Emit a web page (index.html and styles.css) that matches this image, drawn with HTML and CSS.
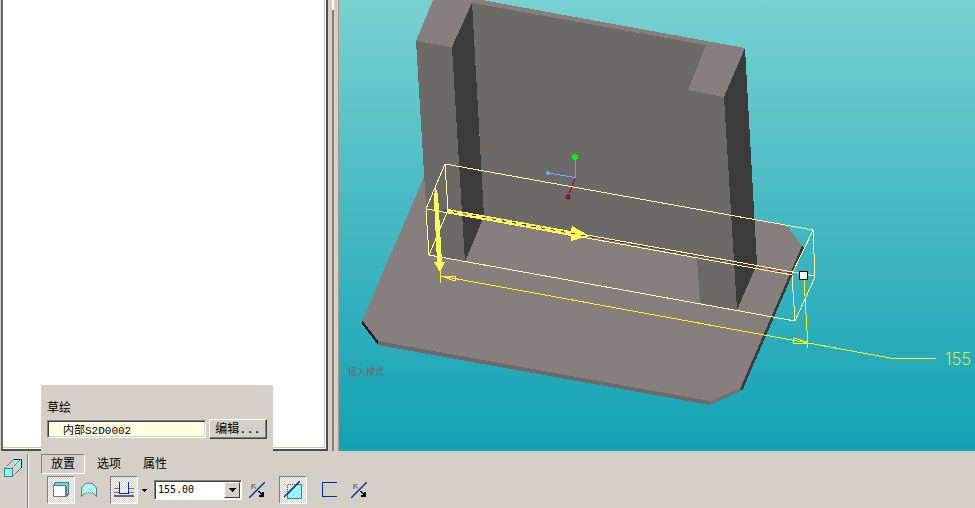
FILE: index.html
```html
<!DOCTYPE html>
<html lang="zh-CN">
<head>
<meta charset="utf-8">
<title>拉伸</title>
<link rel="stylesheet" href="styles.css">
</head>
<body>
<main class="workspace">
  <aside class="tree-pane" aria-label="模型树"></aside>
  <div class="splitter"><span class="grip"></span></div>
  <section class="viewport">
    <svg class="scene" viewBox="339 0 636 451" preserveAspectRatio="xMinYMin slice" role="img" aria-label="模型">
      <g shape-rendering="crispEdges">
        <!-- base plate -->
        <path fill="#877e7e" d="M424 177 362 321 378 342 710 402 741 389 803 247 787 226 740 215Z"/>
        <path fill="#222" d="M362 320 378 341V345L362 324Z"/>
        <path fill="#6c6967" d="M378 341 710 401V405L378 345Z"/>
        <path fill="#767070" d="M710 401 741 388V391L710 405Z"/>
        <path fill="#3b3b3b" d="M740 389 802 246 804 248 742 391Z"/>
        <!-- back wall -->
        <path fill="#6b6a68" d="M472 2 706 44 745 48 724 97 737 310 700 303 697 258 484 215Z"/>
        <!-- left post -->
        <path fill="#6b6a68" d="M416 41 452 47 465 262 429 255Z"/>
        <path fill="#3b3b3b" d="M452 47 472 2 484 216 465 262Z"/>
        <!-- right post -->
        <path fill="#3b3b3b" d="M724 97 745 48 757 264 737 310Z"/>
        <!-- top faces -->
        <path fill="#877e7e" d="M433 0 416 41 452 47 472 3 706 45 688 90 724 97 745 48 482 0Z"/>
      </g>
      <g class="triad" shape-rendering="crispEdges">
        <path stroke="#0f0" d="M575.500 178V158"/>
        <path stroke="#5ab4ff" d="M575 177.500 548 173"/>
        <path stroke="#a0003c" d="M575 178 568 197"/>
      </g>
      <circle cx="575" cy="157" r="3" fill="#0f0"/>
      <circle cx="548" cy="173" r="2" fill="#5ab4ff"/>
      <circle cx="568" cy="197" r="2.500" fill="#a0003c"/>
      <!-- extrusion preview -->
      <g shape-rendering="crispEdges" fill="none">
        <path stroke="#ffffa0" d="M445 164 813 230 815 277 795 321 429 255 426 209ZM445 164 448 210 815 276M448 210 429 255M426 209 792 275 795 321M792 274 813 230"/>
        <path fill="#ffff5c" d="M435 186 438 194 442 262H445L440 272 434 262H437L434 200ZM448 209 571 231 572 226 590 236 571 241 571 236 448 213Z"/>
        <path stroke="#a0003c" stroke-dasharray="4 6" d="M443 210 795 274"/>
        <path stroke="#ff0" d="M440.500 270V283M441 276 893 358.500H936M804 279 808 348M441 276H456L455 281 441 276M808 342 793 338V343H808"/>
      </g>
      <path shape-rendering="crispEdges" fill="#fff" stroke="#000" d="M799.500 271.500h8v8h-8z"/>
      <text class="dimension" x="945" y="365">155</text>
      <text class="mode" x="348" y="375">插入模式</text>
    </svg>
  </section>
</main>

<footer class="dashboard">
  <div class="feature">
    <svg width="18" height="20" viewBox="0 0 18 20" shape-rendering="crispEdges" role="img" aria-label="拉伸">
      <path d="M9 1h8v9h-2l-4-5z" fill="#8ff"/>
      <path d="M9 1.500h8.500M17.500 1v9" stroke="#222" fill="none"/>
      <path d="M1 10 10 1M8 10l9-9M9 18l8-8" stroke="#777" stroke-dasharray="2 1" fill="none"/>
      <path d="M.5 10.500h8v8h-8z" fill="#8ff" stroke="#487f88"/>
    </svg>
  </div>
  <div class="controls">
    <section class="slide-up">
      <label for="sketch">草绘</label>
      <div class="sketch-row">
        <input id="sketch" class="sketch-name" type="text" value="内部S2D0002" readonly>
        <button class="edit" type="button">编辑...</button>
      </div>
    </section>
    <nav class="tabs">
      <button class="tab active" type="button">放置</button>
      <button class="tab" type="button">选项</button>
      <button class="tab" type="button">属性</button>
    </nav>
    <div class="toolbar">
      <button class="tool pressed" type="button" aria-label="实体">
        <svg width="16" height="16" viewBox="0 0 16 16" shape-rendering="crispEdges"><path fill="#66dce4" d="M1 3 3 1h12v11l-3 3V3z"/><path fill="none" stroke="#487f88" d="M1 2.500 3 .5h12v12l-2 2V3.500"/><path fill="#fff" stroke="#777" d="M.5 3.500h12v11H.5z"/></svg>
      </button>
      <button class="tool surface" type="button" aria-label="曲面">
        <svg width="16" height="16" viewBox="0 0 16 16"><path fill="#a8f4f4" stroke="#60777a" d="M.5 14.500V6L4.500 1.500Q8 .5 11.500 1.500L15.500 6V14.500L12 11Q8 10 4 11Z"/><path fill="none" stroke="#fff" stroke-dasharray="1 1" d="M3 4.500h10M2 7.500h12M2 10.500h12"/></svg>
      </button>
      <button class="tool pressed" type="button" aria-label="深度">
        <svg width="20" height="16" viewBox="0 0 20 16" shape-rendering="crispEdges"><path fill="none" stroke="#777" d="M0 6.500h5M15 6.500h5M0 10.500h5M15 10.500h5"/><path stroke="#666" stroke-width="2" d="M0 14h20"/><path fill="none" stroke="#0030a8" d="M5.500 0v11.500h9V0"/></svg>
      </button>
      <button class="drop" type="button" aria-label="深度选项"><svg width="5" height="3" viewBox="0 0 5 3" shape-rendering="crispEdges"><path d="M0 0h5v1H4v1H3v1H2V2H1V1H0z"/></svg></button>
      <div class="combo">
        <input type="text" value="155.00" aria-label="深度值">
        <button type="button" aria-label="最近的值"><svg width="7" height="4" viewBox="0 0 7 4" shape-rendering="crispEdges"><path d="M0 0h7v1H6v1H5v1H4v1H3V3H2V2H1V1H0z"/></svg></button>
      </div>
      <button class="tool flip" type="button" aria-label="反向">
        <svg width="16" height="16" viewBox="0 0 16 16"><path stroke="#0030a8" stroke-width="1.400" d="M0 16 16 0"/><path shape-rendering="crispEdges" fill="#8f8b7e" d="M2 2h5v1H5v1h1v1h1v2H6V6H5V5H4v2H2z"/><path shape-rendering="crispEdges" d="M9 9h2v1h1v1h1v-1h2v5h-5v-2h2v-1h-1v-1h-1v-1H9z"/></svg>
      </button>
      <button class="tool pressed remove" type="button" aria-label="移除材料">
        <svg width="18" height="18" viewBox="0 0 18 18"><path shape-rendering="crispEdges" fill="#8ff" stroke="#487f88" d="M3.500 13 13 3.500h4.500v14h-14z"/><path stroke="#fff" d="m5 16 11-11M10 16l6-6"/><path shape-rendering="crispEdges" fill="none" stroke="#666" stroke-dasharray="1 1" d="M3.500 13V3.500H13"/><path stroke="#0030a8" stroke-width="1.500" d="M0 16 16 0"/></svg>
      </button>
      <button class="tool thin" type="button" aria-label="加厚草绘">
        <svg width="16" height="16" viewBox="0 0 16 16" shape-rendering="crispEdges"><path fill="none" stroke="#0030a8" d="M15 .5H.5v14H15"/></svg>
      </button>
      <button class="tool flip" type="button" aria-label="反向材料侧">
        <svg width="16" height="16" viewBox="0 0 16 16"><path stroke="#0030a8" stroke-width="1.400" d="M0 16 16 0"/><path shape-rendering="crispEdges" fill="#8f8b7e" d="M2 2h5v1H5v1h1v1h1v2H6V6H5V5H4v2H2z"/><path shape-rendering="crispEdges" d="M9 9h2v1h1v1h1v-1h2v5h-5v-2h2v-1h-1v-1h-1v-1H9z"/></svg>
      </button>
    </div>
  </div>
</footer>
</body>
</html>
```
FILE: styles.css
```css
* { box-sizing: border-box; }

body {
  margin: 0;
  height: 100vh;
  display: flex;
  flex-direction: column;
  overflow: hidden;
  background: #d4d0c8;
  color: #000;
  font: 12px/16px "DejaVu Sans Mono", "Noto Sans CJK SC", monospace;
}

button, input { font: inherit; color: inherit; }

button {
  margin: 0;
  padding: 0;
  border: 0;
  background: none;
}

svg { display: block; }

.workspace {
  flex: 1;
  min-height: 0;
  display: grid;
  grid-template-columns: 328px 11px 1fr;
}

.tree-pane {
  margin-left: 1px;
  background: #fff;
  border: 2px solid #4c4c50;
  border-top: 0;
  border-left-color: #66666a;
  box-shadow: inset -1px -1px #fff, inset -2px -2px #c8c8bc;
}

.splitter {
  display: flex;
  padding-left: 4px;
  border-right: 1px solid #a8988c;
}

.grip {
  width: 2px;
  background: linear-gradient(#fff 10px, #808080 10px);
}

.viewport {
  min-width: 0;
  min-height: 0;
  background: linear-gradient(#78d1d1, #46b9c3 47%, #12a2b4);
}

.scene { width: 100%; height: 100%; }
.triad { fill: none; }

.dimension {
  fill: #ff0;
  font: 200 17px Inter, sans-serif;
}

.mode {
  fill: #6d686c;
  font: 9px "Noto Sans CJK SC", sans-serif;
}

.dashboard {
  height: 57px;
  display: flex;
}

.feature {
  width: 28px;
  margin-top: 3px;
  padding: 4px;
  border-right: 1px solid #808080;
  box-shadow: 1px 0 #fff;
}

.controls {
  position: relative;
  flex: 1;
  padding: 3px 13px;
}

.slide-up {
  position: absolute;
  left: 13px;
  bottom: 100%;
  width: 232px;
  height: 66px;
  padding: 15px 6px 0;
  background: #d4d0c8;
}

.slide-up label { display: block; }

.sketch-row {
  display: flex;
  align-items: center;
  gap: 3px;
  margin-top: 3px;
}

.sketch-name {
  flex: 1;
  min-width: 0;
  height: 18px;
  padding: 0 15px;
  border: 1px solid;
  border-color: #808080 #fff #fff #808080;
  box-shadow: inset 1px 1px #404040, inset -1px -1px #d4d0c8;
  background: #ffffe1;
  font: 11px/14px "Liberation Mono", "Noto Sans CJK SC", monospace;
}

.edit {
  width: 58px;
  height: 20px;
  border: 1px solid;
  border-color: #fff #404040 #404040 #fff;
  box-shadow: inset -1px -1px #808080;
}

.tabs { display: flex; height: 20px; }

.tab {
  padding: 0 9px;
  border: 1px solid transparent;
  margin-right: 2px;
}

.tab.active { border-color: #808080 #fff #fff #808080; }

.toolbar {
  display: flex;
  align-items: center;
  height: 28px;
  margin-top: 2px;
  padding-left: 6px;
}

.tool {
  width: 28px;
  height: 28px;
  display: grid;
  place-items: center;
  flex: none;
}

.pressed {
  border: 1px solid;
  border-color: #808080 #fff #fff #808080;
  background: repeating-conic-gradient(#fff 0 25%, #d4d0c8 0 50%) 0 0 / 2px 2px;
}

.surface { margin-right: 7px; }

.drop {
  width: 12px;
  height: 20px;
  display: grid;
  place-items: center;
}

.combo {
  width: 88px;
  height: 20px;
  display: flex;
  margin-left: 4px;
  padding: 1px;
  border: 1px solid;
  border-color: #808080 #fff #fff #808080;
  box-shadow: inset 1px 1px #404040;
  background: #fff;
}

.combo input {
  flex: 1;
  min-width: 0;
  padding: 0 2px;
  border: 0;
  background: none;
  font-size: 10px;
}

.combo button {
  width: 16px;
  display: grid;
  place-items: center;
  background: #d4d0c8;
  border: 1px solid;
  border-color: #fff #404040 #404040 #fff;
}

.flip { margin-left: 1px; }
.remove { margin: 0 9px 0 8px; }
```
